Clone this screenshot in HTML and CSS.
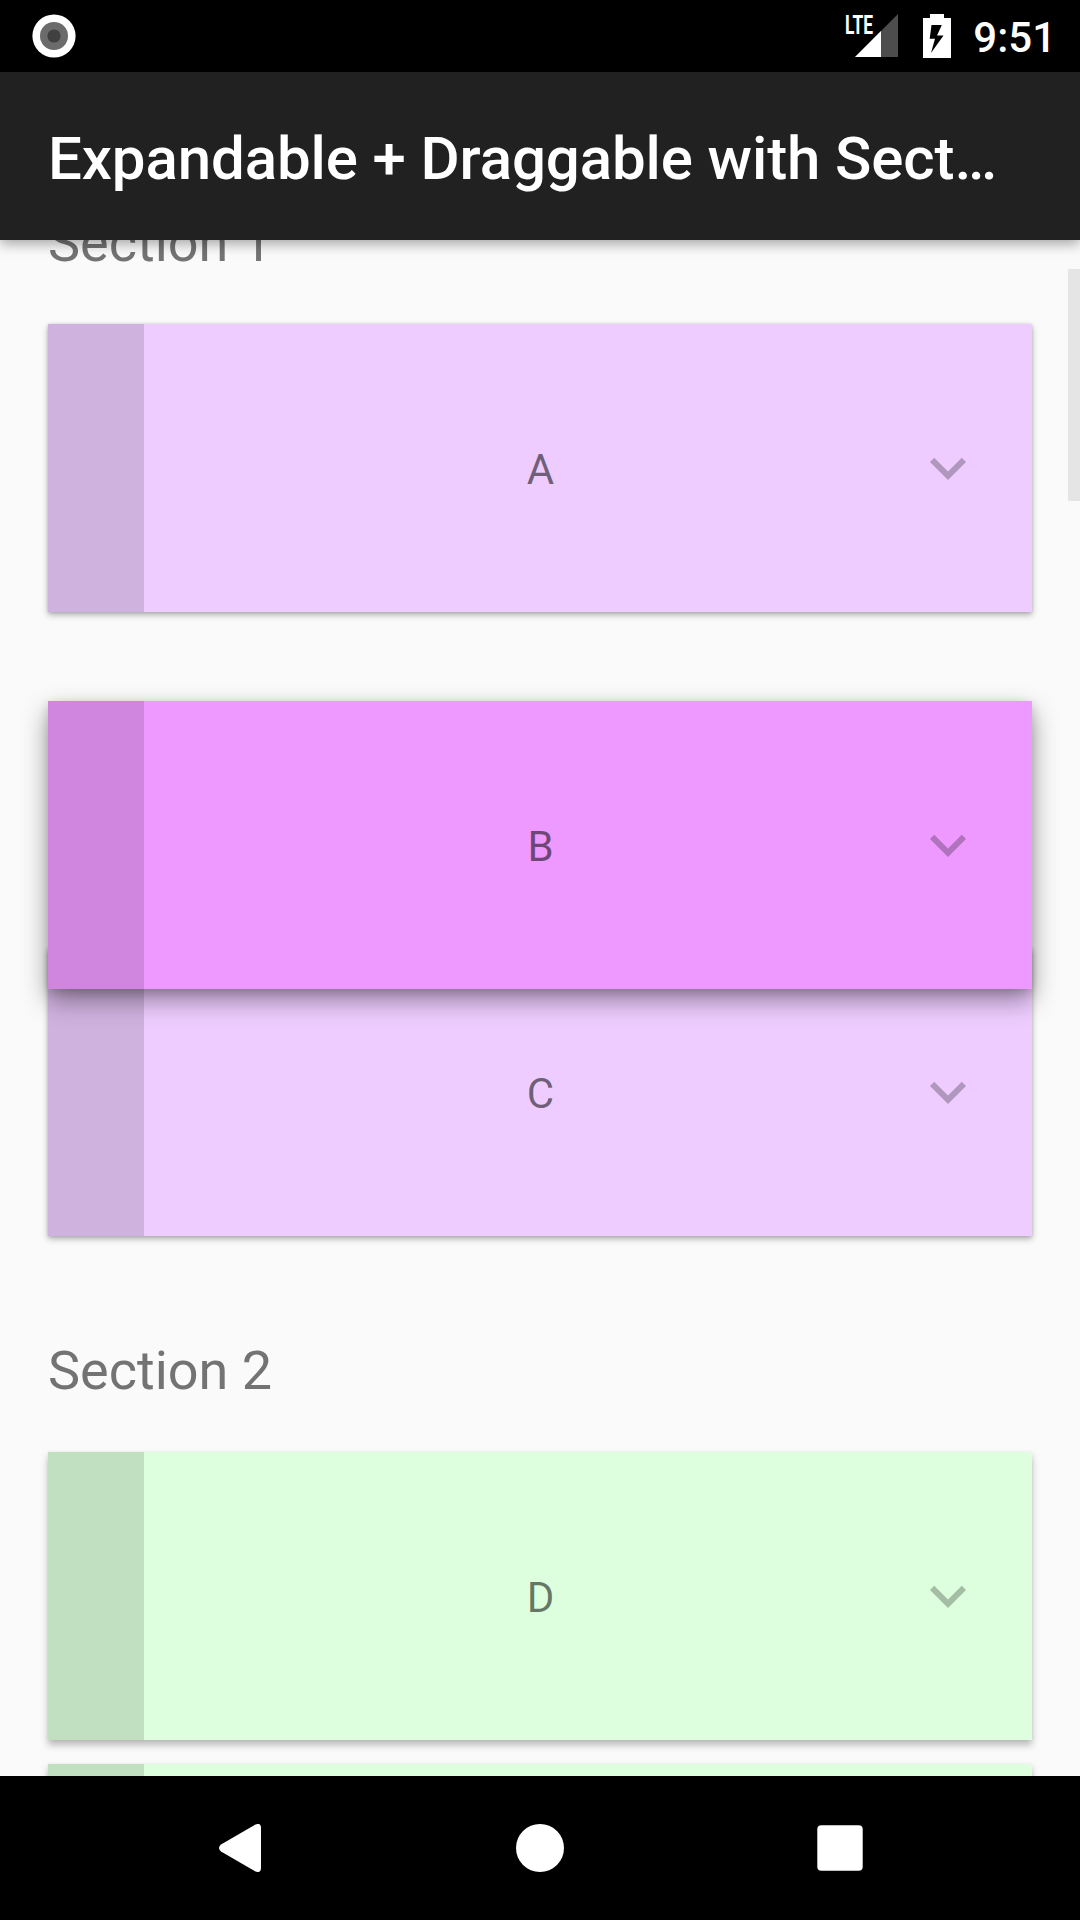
FILE: index.html
```html
<!DOCTYPE html>
<html lang="en">
<head>
<meta charset="utf-8">
<title>Expandable + Draggable with Sections</title>
<link rel="stylesheet" href="styles.css">
</head>
<body>
<svg class="defs" width="0" height="0">
  <symbol id="chevron" viewBox="0 0 24 24"><path d="M16.59 8.59 12 13.17 7.41 8.59 6 10l6 6 6-6z"/></symbol>
</svg>
<div class="screen">
  <header class="status-bar">
    <svg class="record" width="44" height="44" viewBox="0 0 44 44">
      <circle cx="22" cy="22" r="21.6" fill="#fff"/>
      <circle cx="22" cy="22" r="14" fill="#6b6b6b"/>
      <circle cx="22" cy="22" r="6.6" fill="#404040"/>
    </svg>
    <div class="status-icons">
      <svg class="signal" width="54" height="44" viewBox="0 0 54 44">
        <path d="M53 0V43H10z" fill="#4d4d4d"/>
        <path d="M36 17V43H10z" fill="#fff"/>
        <text class="lte" x="0" y="19.5" textLength="28" lengthAdjust="spacingAndGlyphs">LTE</text>
      </svg>
      <svg class="battery" width="28" height="44" viewBox="0 0 28 44">
        <path fill="#fff" fill-rule="evenodd" d="M7 0H21V4H28V44H0V4H7zM8.500 11 6.700 24.700H12L8 39 20.500 21.500H14L18.800 11z"/>
      </svg>
      <span class="clock">9:51</span>
    </div>
  </header>
  <div class="app-bar"><h1>Expandable + Draggable with Sections</h1></div>
  <main class="list">
    <h2 class="section">Section 1</h2>
    <div class="card purple"><span class="handle"></span><span class="label">A</span><svg class="chevron"><use href="#chevron"/></svg></div>
    <div class="card dragging"><span class="handle"></span><span class="label">B</span><svg class="chevron"><use href="#chevron"/></svg></div>
    <div class="card purple"><span class="handle"></span><span class="label">C</span><svg class="chevron"><use href="#chevron"/></svg></div>
    <h2 class="section">Section 2</h2>
    <div class="card green"><span class="handle"></span><span class="label">D</span><svg class="chevron"><use href="#chevron"/></svg></div>
    <div class="card green"><span class="handle"></span></div>
    <div class="scrollbar"></div>
  </main>
  <nav class="nav-bar">
    <svg width="48" height="48" viewBox="0 0 48 48"><path fill="#fff" d="M39.500 .500Q45 -1.500 45 4V44Q45 49.500 39.500 47.500L5 27.500Q1 24 5 20.500z"/></svg>
    <svg width="48" height="48" viewBox="0 0 48 48"><circle cx="24" cy="24" r="24" fill="#fff"/></svg>
    <svg width="48" height="48" viewBox="0 0 48 48"><rect x="1.300" y="1.300" width="45.400" height="45.400" rx="4" fill="#fff"/></svg>
  </nav>
</div>
</body>
</html>
```
FILE: styles.css
```css
* { box-sizing: border-box; }
body {
  margin: 0;
  font-family: Roboto, "Liberation Sans", sans-serif;
  background: #fafafa;
}
.defs { position: absolute; }
.screen {
  width: 1080px;
  height: 1920px;
  display: flex;
  flex-direction: column;
  overflow: hidden;
}
.status-bar {
  flex: 0 0 72px;
  display: flex;
  justify-content: space-between;
  align-items: center;
  padding: 0 24px 0 32px;
  background: #000;
  color: #fff;
}
.status-icons { display: flex; align-items: center; }
.signal { margin-right: 24px; overflow: visible; }
.battery { margin-right: 22px; }
.lte { font-size: 26px; font-weight: 700; fill: #fff; }
.clock { font-size: 42px; font-weight: 500; line-height: 68px; padding-top: 4px; }
.app-bar {
  flex: 0 0 168px;
  z-index: 2;
  display: flex;
  align-items: center;
  padding: 6px 82px 0 48px;
  background: #212121;
  box-shadow: 0 4px 12px rgba(0, 0, 0, .34);
}
h1 {
  margin: 0;
  color: #fff;
  font-size: 60px;
  font-weight: 500;
  line-height: 80px;
  letter-spacing: -.11px;
  white-space: nowrap;
  overflow: hidden;
  text-overflow: ellipsis;
}
.list {
  flex: 1;
  min-height: 0;
  position: relative;
  overflow: hidden;
  display: flex;
  flex-direction: column;
  gap: 24px;
  padding: 0 48px;
}
.section {
  flex: 0 0 168px;
  margin: 0;
  padding-top: 54px;
  font-size: 54px;
  font-weight: 400;
  line-height: 114px;
  color: #737373;
}
.section:first-child { margin-top: -108px; }
.card {
  flex: 0 0 288px;
  display: grid;
  grid-template-columns: 96px 768px 72px;
  align-items: center;
  box-shadow: 0 3px 6px rgba(0, 0, 0, .3), 0 0 3px rgba(0, 0, 0, .12);
}
.purple { background: #eeccff; }
.green {
  background: #ddffdd;
  box-shadow: 0 5px 7px rgba(0, 0, 0, .26), 0 0 3px rgba(0, 0, 0, .06);
}
.dragging {
  z-index: 1;
  background: #ee99ff;
  transform: translateY(65px);
  box-shadow: 0 11px 24px rgba(0, 0, 0, .4), 0 3px 9px rgba(0, 0, 0, .14);
}
.handle { align-self: stretch; background: rgba(0, 0, 0, .125); }
.label {
  padding: 3px 0 0 25px;
  text-align: center;
  font-size: 42px;
  line-height: 50px;
  color: rgba(0, 0, 0, .54);
}
.chevron { width: 72px; height: 72px; fill: rgba(0, 0, 0, .26); }
.scrollbar {
  position: absolute;
  top: 29px;
  right: 0;
  width: 12px;
  height: 232px;
  background: #e5e5e5;
}
.nav-bar {
  flex: 0 0 144px;
  z-index: 2;
  display: flex;
  align-items: center;
  justify-content: center;
  gap: 252px;
  background: #000;
}
```
